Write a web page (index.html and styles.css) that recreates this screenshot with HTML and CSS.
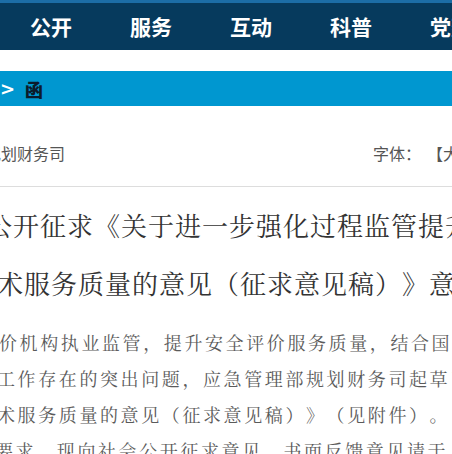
FILE: index.html
```html
<!DOCTYPE html>
<html lang="zh-CN">

<head>
    <meta charset="UTF-8">
    <meta name="viewport" content="width=device-width, initial-scale=1.0">
    <title>应急管理部规划财务司</title>
    <link rel="stylesheet" href="styles.css">
</head>

<body>
    <div class="topline"></div>
    <div class="nav">
        <span class="nav-item">公开</span>
        <span class="nav-item">服务</span>
        <span class="nav-item">互动</span>
        <span class="nav-item">科普</span>
        <span class="nav-item">党建</span>
    </div>

    <div class="crumb">
        <span class="crumb-arrow">&gt;</span>
        <span class="crumb-current">函</span>
    </div>

    <div class="meta">
        <span class="meta-source">规划财务司</span>
        <span class="meta-font">字体：<span class="size-links">【大】【中】【小】</span></span>
    </div>

    <div class="title">
        <div class="title-line first">公开征求《关于进一步强化过程监管提升安全评价</div>
        <div class="title-line second">术服务质量的意见（征求意见稿）》意见的函</div>
    </div>

    <div class="content">
        <div class="text-line l1">价机构执业监管，提升安全评价服务质量，结合国家</div>
        <div class="text-line l2">工作存在的突出问题，应急管理部规划财务司起草了</div>
        <div class="text-line l3">术服务质量的意见（征求意见稿）》（见附件）。</div>
        <div class="text-line l4">要求，现向社会公开征求意见，书面反馈意见请于</div>
    </div>
</body>

</html>
```

FILE: styles.css
```css
body {
    margin: 0;
    width: 452px;
    height: 454px;
    overflow: hidden;
    background-color: white;
    font-family: "Noto Sans CJK SC", sans-serif;
    text-spacing-trim: space-all;
}

.topline {
    height: 3px;
    background-color: #1c6da6;
}

.nav {
    height: 47px;
    background-color: #063a5d;
    display: flex;
    align-items: center;
    gap: 58px;
    padding-left: 30px;
    white-space: nowrap;
}

.nav-item {
    flex-shrink: 0;
    color: white;
    font-size: 21px;
    font-weight: 700;
    line-height: 47px;
}

.crumb {
    margin-top: 21px;
    height: 35px;
    background-color: #0097d0;
    display: flex;
    align-items: center;
    gap: 10px;
}

.crumb-arrow {
    color: white;
    font-family: "DejaVu Sans", sans-serif;
    font-size: 18px;
    font-weight: 700;
}

.crumb-current {
    color: #0b1b2b;
    font-size: 18px;
    font-weight: 900;
}

.meta {
    display: flex;
    white-space: nowrap;
    padding: 36px 0 22px;
    border-bottom: 1px solid #dddddd;
    font-size: 16px;
    line-height: 22px;
    color: #555;
}

.meta-source {
    flex-shrink: 0;
    margin-left: -15px;
}

.meta-font {
    flex-shrink: 0;
    margin-left: 308px;
}

.size-links {
    margin-left: 6px;
}

.title {
    margin-top: 9px;
    font-family: "Noto Serif CJK SC", "Noto Sans CJK SC", serif;
    font-size: 26px;
    letter-spacing: 1px;
    line-height: 58px;
    color: #333;
    white-space: nowrap;
}

.title-line.first {
    margin-left: -14px;
}

.title-line.second {
    margin-left: -3px;
}

.content {
    margin-top: 12px;
    font-family: "Noto Serif CJK SC", "Noto Sans CJK SC", serif;
    font-size: 18px;
    letter-spacing: 2.6px;
    line-height: 36px;
    color: #5a5a5a;
    white-space: nowrap;
}

.text-line.l1 {
    margin-left: -1px;
}

.text-line.l2 {
    margin-left: -3px;
}

.text-line.l3 {
    margin-left: -3px;
}

.text-line.l4 {
    margin-left: -5px;
}
```
